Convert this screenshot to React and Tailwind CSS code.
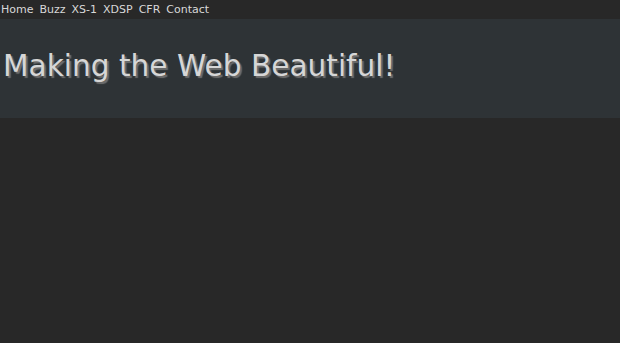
export default function App() {
    return (
        <div className="min-h-[343px] bg-[#282828] font-['DejaVu_Sans',sans-serif]">
            {/* Nav */}
            <nav className="flex gap-[6px] h-[19px] items-center text-[11px] text-[#d8d8d8] leading-none px-[1px]">
                <a>Home</a>
                <a>Buzz</a>
                <a>XS-1</a>
                <a>XDSP</a>
                <a>CFR</a>
                <a>Contact</a>
            </nav>

            {/* Banner */}
            <header className="h-[99px] bg-[#2e3336] flex items-center px-[3px]">
                <h1 className="text-[29.6px] leading-none text-[#d6d6d6] [text-shadow:2px_2px_1px_#6e6e6e] pb-[3px]">
                    Making the Web Beautiful!
                </h1>
            </header>
        </div>
    );
}
